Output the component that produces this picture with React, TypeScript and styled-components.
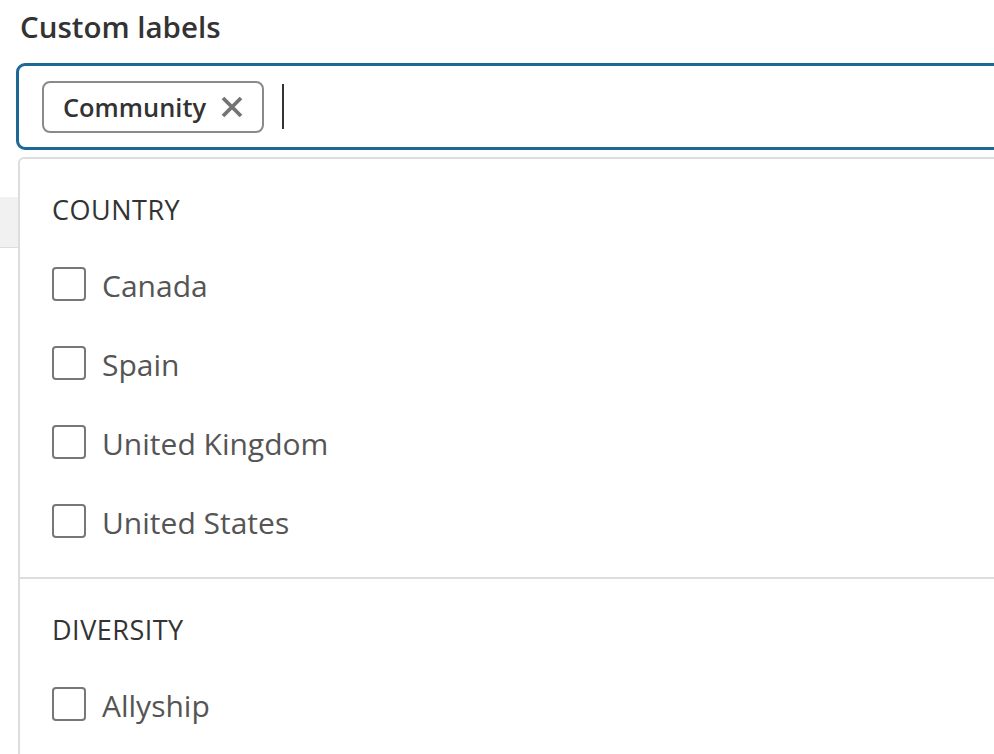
import React from "react";
import styled, {createGlobalStyle} from "styled-components";

const GlobalStyle = createGlobalStyle`
  html, body {
    margin: 0;
    padding: 0;
    background: #ffffff;
    overflow: hidden;
  }
  body {
    font-family: "Open Sans", "Liberation Sans", sans-serif;
    color: #333333;
  }
`

const Page = styled.div`
  position: relative;
  width: 994px;
  height: 754px;
  overflow: hidden;
  padding: 8px 0 0 16px;
  box-sizing: border-box;
`

const Title = styled.h2`
  margin: 0 0 17px 4px;
  font-size: 29.5px;
  line-height: 38px;
  font-weight: 600;
  color: #333333;
`

const Field = styled.div`
  box-sizing: border-box;
  width: 1000px;
  height: 87px;
  border: 3px solid #1d6897;
  border-radius: 9px;
  display: flex;
  align-items: center;
  padding-left: 23px;
  gap: 18px;
`

const Chip = styled.div`
  box-sizing: border-box;
  height: 52px;
  border: 2px solid #8a8a8a;
  border-radius: 8px;
  display: flex;
  align-items: center;
  gap: 15px;
  padding: 0 19px 0 19px;
  font-size: 25.4px;
  font-weight: 600;
  color: #333333;
`

const RemoveIcon = styled.svg`
  width: 22px;
  height: 22px;
  display: block;
`

const Caret = styled.div`
  width: 2px;
  height: 45px;
  background: #333333;
`

const Underlay = styled.div`
  margin: 47px 0 0 -16px;
  height: 50px;
  width: 1010px;
  background: #f1f1f1;
  border-bottom: 1px solid #dcdcdc;
`

const Menu = styled.div`
  position: absolute;
  top: 157px;
  left: 18px;
  width: 1000px;
  height: 640px;
  box-sizing: border-box;
  background: #ffffff;
  border: 2px solid #dddddd;
  border-radius: 6px 0 0 0;
`

const Group = styled.div<{divided?: boolean}>`
  padding: 35px 0 39px 32px;
  border-top: ${props => props.divided ? "2px solid #dddddd" : "0"};
`

const GroupTitle = styled.div`
  font-size: 27px;
  line-height: 32px;
  letter-spacing: 0.5px;
  color: #333333;
  margin-bottom: 41px;
`

const Options = styled.div`
  display: flex;
  flex-direction: column;
  gap: 45px;
`

const Option = styled.label`
  display: flex;
  align-items: flex-start;
  height: 34px;
  gap: 16px;
  cursor: pointer;
`

const Box = styled.span`
  box-sizing: border-box;
  width: 34px;
  height: 34px;
  border: 2px solid #777777;
  border-radius: 4px;
  background: #ffffff;
  flex-shrink: 0;
`

const OptionText = styled.span`
  font-size: 30px;
  line-height: 34px;
  padding-top: 2px;
  color: #555555;
`

const groups = [
    {title: "COUNTRY", options: ["Canada", "Spain", "United Kingdom", "United States"]},
    {title: "DIVERSITY", options: ["Allyship"]},
];

const App: React.FC = () => {
    return (
        <Page>
            <GlobalStyle/>
            <Title>Custom labels</Title>
            <Field>
                <Chip>
                    Community
                    <RemoveIcon viewBox="0 0 22 22">
                        <path d="M2 2 L20 20 M20 2 L2 20" stroke="#737373" strokeWidth="3.8" strokeLinecap="butt" fill="none"/>
                    </RemoveIcon>
                </Chip>
                <Caret/>
            </Field>
            <Underlay/>
            <Menu>
                {groups.map((group, index) => (
                    <Group key={group.title} divided={index > 0}>
                        <GroupTitle>{group.title}</GroupTitle>
                        <Options>
                            {group.options.map(option => (
                                <Option key={option}>
                                    <Box/>
                                    <OptionText>{option}</OptionText>
                                </Option>
                            ))}
                        </Options>
                    </Group>
                ))}
            </Menu>
        </Page>
    )
}

export default App;
